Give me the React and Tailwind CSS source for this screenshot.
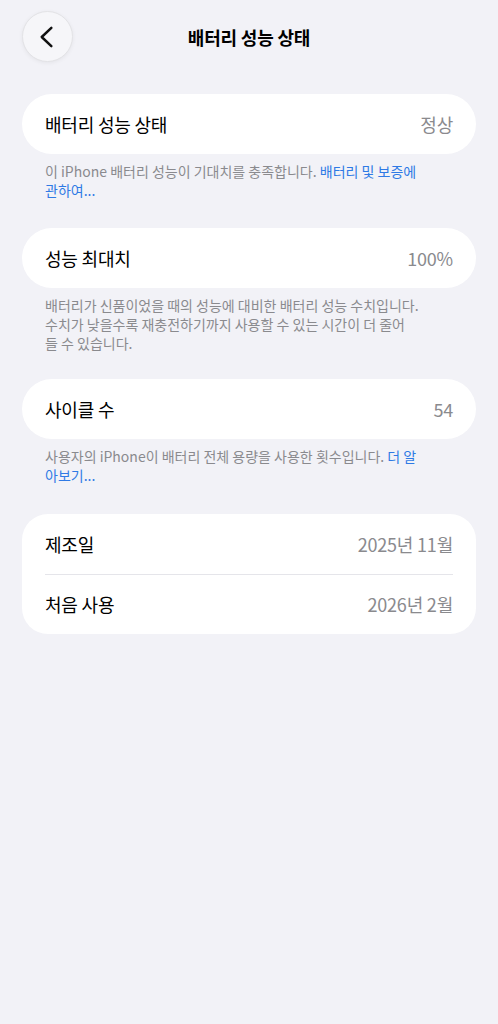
import React from "react";

const font = {
  fontFamily: '"Noto Sans CJK KR", "Noto Sans", Inter, sans-serif',
};

function Row({ label, value }) {
  return (
    <div className="flex items-center justify-between h-[60px] px-[23px]">
      <span className="text-[18px] text-black tracking-[-0.2px]">{label}</span>
      <span className="text-[18px] text-[#8a8a8e] tracking-[-0.2px]">{value}</span>
    </div>
  );
}

function Footnote({ children }) {
  return (
    <p className="px-[45px] pt-[8px] text-[14px] leading-[19px] text-[#8a8a8e]">
      {children}
    </p>
  );
}

export default function App() {
  return (
    <div
      className="w-[498px] h-[1024px] bg-[#f2f2f7] overflow-hidden"
      style={font}
    >
      {/* nav bar */}
      <div className="relative h-[74px] flex items-center justify-center">
        <button className="absolute left-[22px] top-[11px] w-[51px] h-[51px] rounded-full bg-[#f6f6f9] border border-[#e3e3e6] shadow-[0_1px_4px_rgba(0,0,0,0.06)] flex items-center justify-center">
          <svg width="51" height="51" viewBox="0 0 51 51" fill="none">
            <path
              d="M29.5 16.5 L19.5 26 L29.5 35.5"
              stroke="#111"
              strokeWidth="2.6"
              strokeLinecap="round"
              strokeLinejoin="round"
            />
          </svg>
        </button>
        <h1 className="text-[18px] font-bold text-black tracking-[-0.2px]">
          배터리 성능 상태
        </h1>
      </div>

      <div className="pt-[20px]">
        <div className="mx-[22px] bg-white rounded-[30px]">
          <Row label="배터리 성능 상태" value="정상" />
        </div>
        <Footnote>
          이 iPhone 배터리 성능이 기대치를 충족합니다.{" "}
          <span className="text-[#2f7ae5]">
            배터리 및 보증에
            <br />
            관하여...
          </span>
        </Footnote>

        <div className="mx-[22px] mt-[28px] bg-white rounded-[30px]">
          <Row label="성능 최대치" value="100%" />
        </div>
        <Footnote>
          배터리가 신품이었을 때의 성능에 대비한 배터리 성능 수치입니다.
          <br />
          수치가 낮을수록 재충전하기까지 사용할 수 있는 시간이 더 줄어
          <br />
          들 수 있습니다.
        </Footnote>

        <div className="mx-[22px] mt-[26px] bg-white rounded-[30px]">
          <Row label="사이클 수" value="54" />
        </div>
        <Footnote>
          사용자의 iPhone이 배터리 전체 용량을 사용한 횟수입니다.{" "}
          <span className="text-[#2f7ae5]">
            더 알
            <br />
            아보기...
          </span>
        </Footnote>

        <div className="mx-[22px] mt-[29px] bg-white rounded-[26px] px-[23px]">
          <div className="flex items-center justify-between h-[60px]">
            <span className="text-[18px] text-black tracking-[-0.2px]">제조일</span>
            <span className="text-[18px] text-[#8a8a8e] tracking-[-0.2px]">2025년 11월</span>
          </div>
          <div className="h-px bg-[#e5e5ea]" />
          <div className="flex items-center justify-between h-[59px]">
            <span className="text-[18px] text-black tracking-[-0.2px]">처음 사용</span>
            <span className="text-[18px] text-[#8a8a8e] tracking-[-0.2px]">2026년 2월</span>
          </div>
        </div>
      </div>
    </div>
  );
}
